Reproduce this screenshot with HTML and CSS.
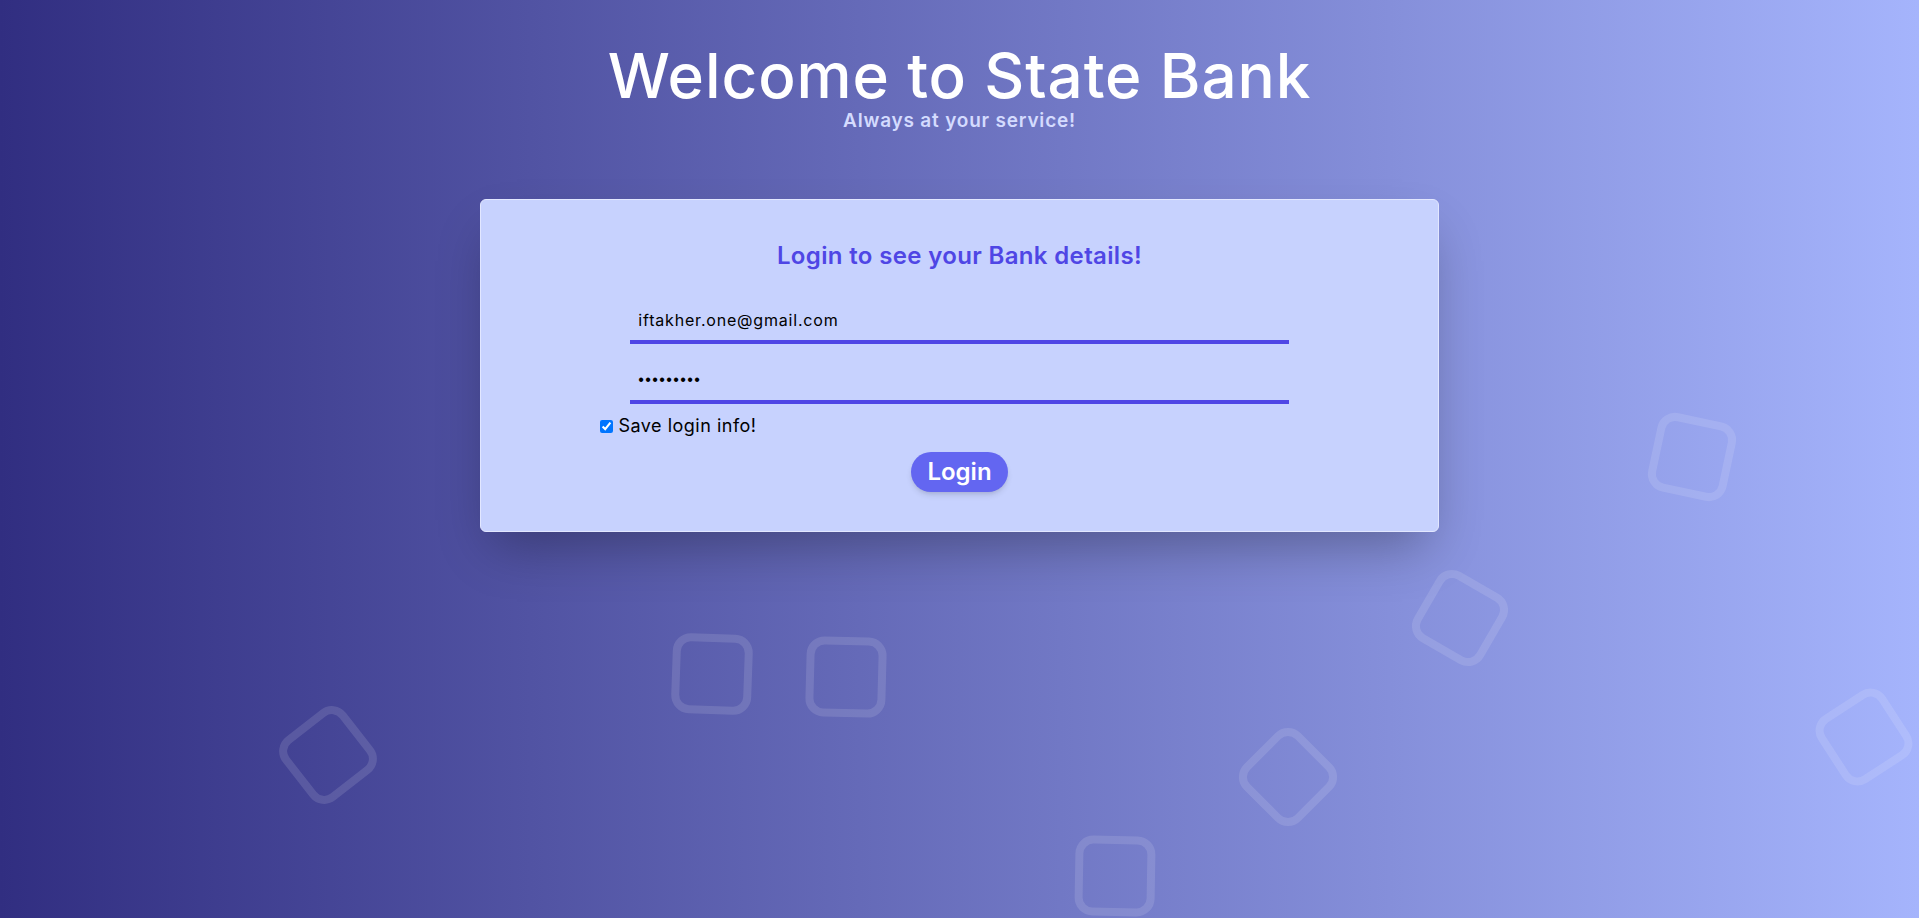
FILE: index.html
```html
<!DOCTYPE html>
<html lang="en">
<head>
<meta charset="utf-8">
<title>State Bank</title>
<link rel="stylesheet" href="styles.css">
</head>
<body class="page">
  <div class="shapes" aria-hidden="true">
    <span class="shape shape-1"></span>
    <span class="shape shape-2"></span>
    <span class="shape shape-3"></span>
    <span class="shape shape-4"></span>
    <span class="shape shape-5"></span>
    <span class="shape shape-6"></span>
    <span class="shape shape-7"></span>
    <span class="shape shape-8"></span>
  </div>
  <header class="hero">
    <h1 class="hero-title">Welcome to State Bank</h1>
    <p class="hero-sub">Always at your service!</p>
  </header>
  <main class="card">
    <h2 class="card-title">Login to see your Bank details!</h2>
    <form class="login-form">
      <input class="field" type="email" value="iftakher.one@gmail.com">
      <input class="field field-pass" type="password" value="123456789">
      <label class="remember"><input class="remember-box" type="checkbox" checked><span class="remember-text">Save login info!</span></label>
      <div class="btn-row"><button class="login-btn" type="button">Login</button></div>
    </form>
  </main>
</body>
</html>
```
FILE: styles.css
```css
html, body {
  margin: 0;
  padding: 0;
}

.page {
  position: relative;
  height: 100vh;
  overflow: hidden;
  background: linear-gradient(to right, #312e81, #a5b4fc);
  font-family: Inter, "Noto Sans", "Liberation Sans", sans-serif;
}

.shapes {
  position: absolute;
  inset: 0;
  z-index: 0;
  pointer-events: none;
}

.shape {
  position: absolute;
  box-sizing: border-box;
  width: 80px;
  height: 80px;
  border: 8px solid rgba(255, 255, 255, 0.12);
  border-radius: 18px;
}

.shape-1 { left: 672px; top: 634px; transform: rotate(2deg); }
.shape-2 { left: 806px; top: 637px; transform: rotate(1.5deg); }
.shape-3 { left: 288px; top: 715px; transform: rotate(52deg); }
.shape-4 { left: 1248px; top: 737px; transform: rotate(45deg); }
.shape-5 { left: 1420px; top: 578px; transform: rotate(30deg); }
.shape-6 { left: 1652px; top: 417px; transform: rotate(12deg); }
.shape-7 { left: 1824px; top: 697px; transform: rotate(57deg); }
.shape-8 { left: 1075px; top: 836px; transform: rotate(1deg); }

.hero {
  position: relative;
  z-index: 1;
  padding-top: 45px;
  text-align: center;
}

.hero-title {
  margin: 0;
  font-size: 62px;
  line-height: 62px;
  font-weight: 500;
  letter-spacing: 0.9px;
  color: #ffffff;
}

.hero-sub {
  margin: 0;
  font-size: 19px;
  line-height: 28px;
  font-weight: 600;
  letter-spacing: 0.8px;
  color: #d4dbfe;
}

.card {
  position: relative;
  z-index: 1;
  box-sizing: border-box;
  width: 50%;
  margin: 64px auto 0;
  padding: 40px 0 39px;
  background: #c7d2fe;
  border: 1px solid #e2e7ff;
  border-radius: 6px;
  box-shadow: 0 25px 50px -12px rgba(0, 0, 0, 0.3);
}

.card-title {
  margin: 0 0 28px;
  text-align: center;
  font-size: 24px;
  line-height: 32px;
  font-weight: 600;
  letter-spacing: 0.35px;
  color: #4f46e5;
}

.login-form {
  width: 75%;
  margin: 0 auto;
}

.field {
  display: block;
  box-sizing: border-box;
  width: 91.6667%;
  margin: 0 auto;
  padding: 8px 8px;
  font-family: inherit;
  font-size: 16px;
  line-height: 24px;
  letter-spacing: 0.8px;
  height: 44px;
  color: #000000;
  background: transparent;
  border: none;
  border-bottom: 4px solid #4f46e5;
  border-radius: 0;
  outline: none;
}

.field-pass {
  margin-top: 16px;
  font-family: "Liberation Sans", Arial, sans-serif;
  letter-spacing: 1.4px;
}

.remember {
  display: flex;
  align-items: center;
  margin-top: 10px;
  font-size: 18px;
  line-height: 24px;
  letter-spacing: 0.5px;
  color: #000000;
}

.remember-box {
  width: 13px;
  height: 13px;
  margin: 0 5px 0 0;
}

.btn-row {
  display: flex;
  justify-content: center;
  margin-top: 14px;
}

.login-btn {
  padding: 4px 16px;
  font-family: inherit;
  font-size: 24px;
  line-height: 32px;
  font-weight: 600;
  color: #ffffff;
  background: #6366f1;
  border: none;
  border-radius: 9999px;
  box-shadow: 0 4px 6px -1px rgba(0, 0, 0, 0.12), 0 2px 4px -2px rgba(0, 0, 0, 0.1);
}
```
